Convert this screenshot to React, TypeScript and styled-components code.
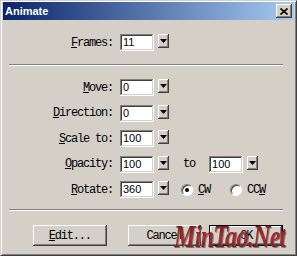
import React from 'react'
import styled, { createGlobalStyle } from 'styled-components'

const Global = createGlobalStyle`
html, body { margin:0; padding:0; background:#d4d0c8; }
`

const Window = styled.div`
position:relative;
box-sizing:border-box;
width:297px;
height:256px;
background:#d4d0c8;
border:1px solid;
border-color:#d4d0c8 #404040 #404040 #d4d0c8;
box-shadow: inset 1px 1px #fff, inset -1px -1px #808080;
padding:1px 2px 2px 2px;
font-family:"Liberation Mono", monospace;
font-size:12px;
letter-spacing:-1.2px;
color:#000;
overflow:hidden;
`
const TitleBar = styled.div`
height:18px;
display:flex;
align-items:center;
justify-content:space-between;
background:linear-gradient(to right, #0a246a, #a6caf0);
padding:0 2px 0 2px;
`
const Title = styled.span`
font-family:"Liberation Sans", Arial, sans-serif;
font-weight:bold;
font-size:11px;
letter-spacing:0;
color:#fff;
`
const CloseButton = styled.div`
width:16px;
height:14px;
box-sizing:border-box;
background:#d4d0c8;
box-shadow: inset -1px -1px #404040, inset 1px 1px #fff, inset -2px -2px #808080;
display:flex;
align-items:center;
justify-content:center;
`
const Body = styled.div`
padding:14px 11px 0 6px;
`
const Row = styled.div`
display:flex;
align-items:center;
height:17px;
`
const Rows = styled.div`
display:flex;
flex-direction:column;
gap:8.5px;
margin-top:13px;
`
const Label = styled.span`
width:104px;
text-align:right;
white-space:pre;
`
const Field = styled.div<{ $left?: number }>`
box-sizing:border-box;
width:34px;
height:17px;
margin-left:${p => p.$left ?? 7}px;
background:#fff;
box-shadow: inset -1px -1px #fff, inset 1px 1px #808080, inset -2px -2px #d4d0c8, inset 2px 2px #404040;
font-family:"Liberation Sans", Arial, sans-serif;
letter-spacing:0;
font-size:11px;
line-height:17px;
padding-left:3px;
`
const DropButton = styled.div`
box-sizing:border-box;
width:11px;
height:14px;
margin-left:4px;
align-self:flex-start;
background:#d4d0c8;
box-shadow: inset -1px -1px #404040, inset 1px 1px #fff, inset -2px -2px #808080;
display:flex;
align-items:center;
justify-content:center;
`
const Separator = styled.div<{ $top: number }>`
margin-top:${p => p.$top}px;
border-top:1px solid #808080;
border-bottom:1px solid #fff;
height:0;
`
const To = styled.span`
margin-left:14px;
`
const Radio = styled.span<{ $left: number }>`
box-sizing:border-box;
width:12px;
height:12px;
margin-left:${p => p.$left}px;
border-radius:50%;
background:#fff;
border:1px solid;
border-color:#808080 #fff #fff #808080;
box-shadow: inset 1px 1px #404040;
display:flex;
align-items:center;
justify-content:center;
`
const Dot = styled.span`
width:4px;
height:4px;
border-radius:50%;
background:#000;
`
const RadioText = styled.span`
margin-left:5px;
`
const ButtonRow = styled.div`
display:flex;
margin-top:14px;
padding-left:24px;
`
const Button = styled.div<{ $left?: number; $default?: boolean }>`
box-sizing:border-box;
width:74px;
height:21px;
margin-left:${p => p.$left ?? 0}px;
display:flex;
align-items:center;
justify-content:center;
background:#d4d0c8;
border:${p => (p.$default ? '1px solid #000' : 'none')};
box-shadow: inset -1px -1px #404040, inset 1px 1px #fff, inset -2px -2px #808080;
`
const Watermark = styled.div`
position:absolute;
left:173px;
top:218px;
font-family:"Liberation Serif", "Times New Roman", serif;
font-style:italic;
font-weight:bold;
font-size:31px;
letter-spacing:-1px;
transform:scaleX(0.78);
transform-origin:left top;
background:linear-gradient(to bottom, #6e1010, #a83030 55%, #5a0c0c);
-webkit-background-clip:text;
background-clip:text;
color:transparent;
filter:drop-shadow(1px 1px 0 #707070);
white-space:nowrap;
`

const Arrow = () => (
  <svg width="7" height="4" viewBox="0 0 7 4">
    <path d="M0 0h7L3.5 4z" fill="#000" />
  </svg>
)

const Combo = ({ value, left }: { value: string; left?: number }) => (
  <>
    <Field $left={left}>{value}</Field>
    <DropButton><Arrow /></DropButton>
  </>
)

export default function App() {
  return (
    <>
      <Global />
      <Window>
        <TitleBar>
          <Title>Animate</Title>
          <CloseButton>
            <svg width="8" height="7" viewBox="0 0 8 7">
              <path d="M0.5 0.5L7.5 6.5M7.5 0.5L0.5 6.5" stroke="#000" strokeWidth="1.6" />
            </svg>
          </CloseButton>
        </TitleBar>
        <Body>
          <Row>
            <Label><u>F</u>rames:</Label>
            <Combo value="11" />
          </Row>
          <Separator $top={13} />
          <Rows>
            <Row>
              <Label><u>M</u>ove:</Label>
              <Combo value="0" />
            </Row>
            <Row>
              <Label><u>D</u>irection:</Label>
              <Combo value="0" />
            </Row>
            <Row>
              <Label><u>S</u>cale to:</Label>
              <Combo value="100" />
            </Row>
            <Row>
              <Label><u>O</u>pacity:</Label>
              <Combo value="100" />
              <To>to</To>
              <Combo value="100" left={14} />
            </Row>
            <Row>
              <Label><u>R</u>otate:</Label>
              <Combo value="360" />
              <Radio $left={12}><Dot /></Radio>
              <RadioText><u>C</u>W</RadioText>
              <Radio $left={20} />
              <RadioText>CC<u>W</u></RadioText>
            </Row>
          </Rows>
          <Separator $top={11} />
          <ButtonRow>
            <Button><span><u>E</u>dit...</span></Button>
            <Button $left={21}>Cancel</Button>
            <Button $left={8} $default>OK</Button>
          </ButtonRow>
        </Body>
        <Watermark>MinTao.Net</Watermark>
      </Window>
    </>
  )
}
